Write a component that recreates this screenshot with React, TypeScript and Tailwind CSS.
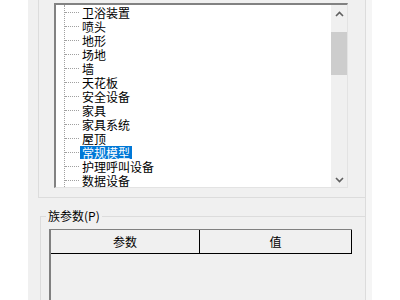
import React from "react";

const items = [
    "卫浴装置", "喷头", "地形", "场地", "墙", "天花板", "安全设备",
    "家具", "家具系统", "屋顶", "常规模型", "护理呼叫设备", "数据设备",
];

const FONT = { fontFamily: '"Noto Sans CJK SC", "Liberation Sans", sans-serif' };

function TreeRow({ label, selected }: { label: string; selected?: boolean }) {
    return (
        <div className="flex items-center h-[14px]">
            {/* horizontal dotted connector */}
            <div className="w-[14px] ml-[1px] border-t border-dotted border-[#a0a0a0]" />
            <span
                className={
                    "ml-[1px] px-[2px] h-[13px] leading-[13px] text-[12px] whitespace-nowrap " +
                    (selected ? "bg-[#0078d7] text-white" : "text-black")
                }
            >
                {label}
            </span>
        </div>
    );
}

function ScrollBar() {
    return (
        <div className="w-[16px] h-full bg-[#f0f0f0] flex flex-col items-center">
            <div className="h-[18px] w-full flex items-center justify-center">
                <svg width="9" height="6" viewBox="0 0 9 6">
                    <path d="M1 5 L4.5 1.5 L8 5" fill="none" stroke="#606060" strokeWidth="1.6" />
                </svg>
            </div>
            <div className="h-[9px]" />
            <div className="w-full h-[43px] bg-[#cdcdcd]" />
            <div className="flex-1" />
            <div className="h-[14px] w-full flex items-center justify-center">
                <svg width="9" height="6" viewBox="0 0 9 6">
                    <path d="M1 1 L4.5 4.5 L8 1" fill="none" stroke="#606060" strokeWidth="1.6" />
                </svg>
            </div>
        </div>
    );
}

export default function App() {
    return (
        <div className="w-[400px] h-[300px] bg-white flex overflow-hidden" style={FONT}>
            <div className="w-[28px] shrink-0" />

            <div className="w-[338px] shrink-0 bg-[#f0f0f0] border-r border-[#dcdcdc] flex flex-col">
                {/* upper frame with the tree list */}
                <div className="ml-[10px] h-[198px] border-l border-b border-[#dcdcdc] pl-[15px] pt-[3px]">
                    <div className="w-[294px] h-[185px] bg-white border-t-2 border-l-2 border-[#828282] border-r border-b border-r-[#e3e3e3] border-b-[#e3e3e3] flex">
                        <div className="flex-1 relative pl-[8px]">
                            {/* vertical dotted trunk */}
                            <div className="absolute left-[8px] top-0 bottom-0 border-l border-dotted border-[#a0a0a0]" />
                            {items.map(it => (
                                <TreeRow key={it} label={it} selected={it === "常规模型"} />
                            ))}
                        </div>
                        <ScrollBar />
                    </div>
                </div>

                {/* family parameters group */}
                <div className="mt-[18px] ml-[12px] flex-1 relative border-l border-t border-[#dcdcdc] pl-[8px] pt-[12px]">
                    <span className="absolute left-[5px] -top-[9px] px-[2px] bg-[#f0f0f0] text-[12px] leading-[16px] text-black">
                        族参数(P)
                    </span>
                    <div className="w-[303px] h-full border-l-2 border-t border-[#808080] flex flex-col">
                        <div className="flex h-[24px] border-b border-black">
                            <div className="w-[149px] flex items-center justify-center border-r border-black text-[12px] text-black">
                                参数
                            </div>
                            <div className="w-[152px] flex items-center justify-center border-r border-black text-[12px] text-black">
                                值
                            </div>
                        </div>
                        <div className="flex-1" />
                    </div>
                </div>
            </div>

            <div className="w-[6px] shrink-0 bg-[#f5f5f5]" />
            <div className="flex-1" />
        </div>
    );
}
